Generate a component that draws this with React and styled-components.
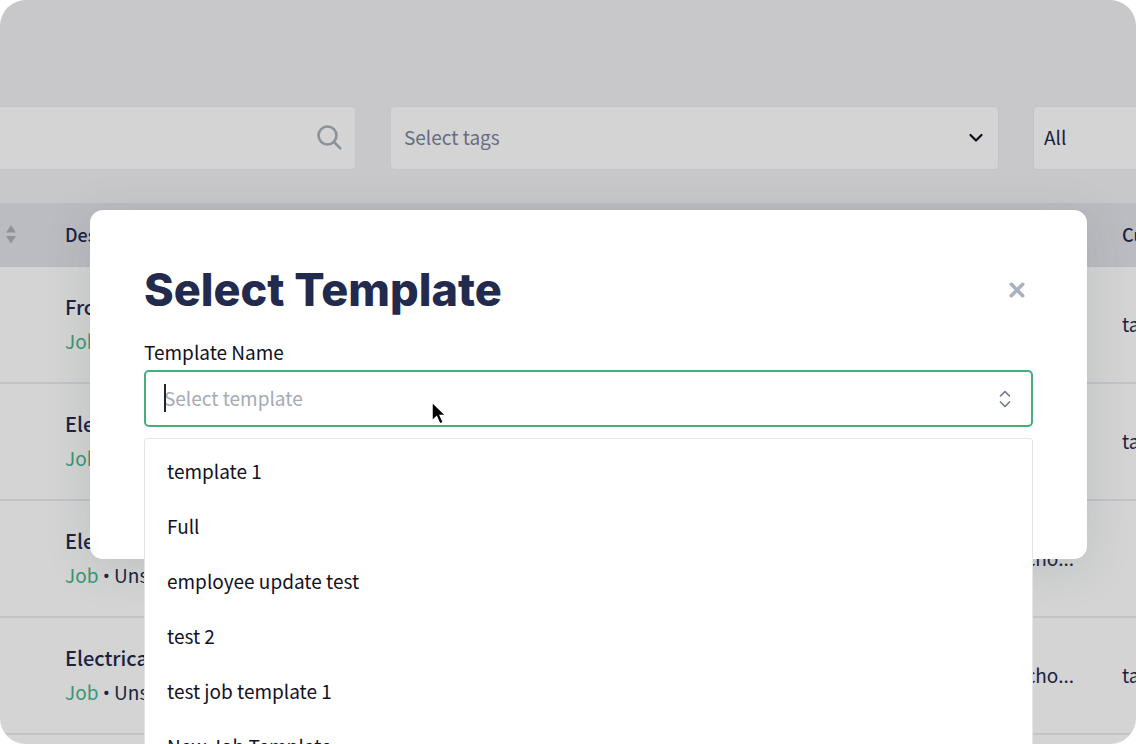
import React from "react";
import styled, { createGlobalStyle } from "styled-components";

const GlobalStyle = createGlobalStyle`
  *, *::before, *::after { box-sizing: border-box; }
  body {
    margin: 0;
    background: #fff;
    color: #222a4d;
    font-family: "Noto Sans CJK SC", "Noto Sans", sans-serif;
    font-size: 19px;
    line-height: 32px;
  }
  button, input, select { font: inherit; color: inherit; }
`;

const Screen = styled.div`
  position: relative;
  height: 100vh;
  overflow: hidden;
  border-radius: 26px;
  background: #f1f1f3;
`;

const Filters = styled.form`
  display: grid;
  grid-template-columns: 356px 1fr 103px;
  gap: 34px;
  padding: 106px 0 33px;
`;

const Field = styled.div`
  display: flex;
  align-items: center;
  height: 64px;
  padding: 0 13px 0 ${(p) => p.$indent || "13px"};
  background: #fff;
  border: 1px solid #ececf1;
  border-left-width: ${(p) => (p.$flush === "left" ? "0" : "1px")};
  border-right-width: ${(p) => (p.$flush === "right" ? "0" : "1px")};
  border-radius: ${(p) =>
    p.$flush === "left" ? "0 5px 5px 0" : p.$flush === "right" ? "5px 0 0 5px" : "5px"};
`;

const SearchInput = styled.input`
  flex: 1;
  min-width: 0;
  border: 0;
  outline: 0;
  background: transparent;
`;

const FilterSelect = styled.select`
  flex: 1;
  min-width: 0;
  border: 0;
  padding: 0 0 2px;
  appearance: none;
  background: transparent;
  color: ${(p) => (p.$muted ? "#7d839d" : "#222a4d")};
`;

const Table = styled.table`
  width: 100%;
  table-layout: fixed;
  border-collapse: separate;
  border-spacing: 0;
  background: #fff;
`;

const HeadCell = styled.th`
  width: ${(p) => p.$width || "auto"};
  height: 64px;
  padding: 0 0 3px;
  background: #e1e3e9;
  text-align: left;
  font-size: 18px;
  font-weight: 500;
  white-space: nowrap;
`;

const SortButton = styled.button`
  display: flex;
  border: 0;
  padding: 0 0 0 5px;
  background: none;
`;

const Cell = styled.td`
  height: 117px;
  padding: 0 ${(p) => (p.$end ? "48px" : "0")} 2px 0;
  border-bottom: 2px solid #ebebf1;
  text-align: ${(p) => (p.$end ? "right" : "left")};
  white-space: nowrap;
`;

const JobCell = styled(Cell)`
  padding-bottom: 0;
`;

const JobName = styled.div`
  font-size: 20px;
  font-weight: 500;
`;

const JobMeta = styled.div`
  margin-top: 2px;
`;

const JobLink = styled.a`
  color: #43b78f;
  text-decoration: none;
`;

const Dot = styled.span`
  font-family: "Open Sans", sans-serif;
`;

const Overlay = styled.div`
  position: absolute;
  inset: 0;
  padding: 210px 49px 0 90px;
  background: rgba(0, 0, 0, 0.17);
`;

const Dialog = styled.section`
  padding: 53px 54px 132px;
  border-radius: 13px;
  background: #fff;
  box-shadow: 0 8px 48px rgba(40, 60, 60, 0.13);
`;

const DialogHeader = styled.header`
  display: flex;
  align-items: center;
  justify-content: space-between;
  height: 53px;
`;

const Title = styled.h1`
  margin: 0;
  font-family: Inter, sans-serif;
  font-size: 45px;
  line-height: 52px;
  font-weight: 800;
`;

const CloseButton = styled.button`
  display: flex;
  border: 0;
  padding: 8px;
  background: none;
`;

const Label = styled.label`
  display: block;
  margin-top: 20px;
  padding-bottom: 2px;
  color: #12121f;
`;

const Combo = styled.div`
  position: relative;
  display: flex;
  align-items: center;
  height: 57px;
  padding: 0 19px 0 18px;
  border: 2px solid #45ae79;
  border-radius: 5px;
`;

const ComboInput = styled.input`
  flex: 1;
  min-width: 0;
  border: 0;
  outline: 0;
  padding: 0 0 2px;
  background: transparent;
  &::placeholder { color: #a5abb5; opacity: 1; }
`;

const Caret = styled.span`
  position: absolute;
  left: 18px;
  top: 12px;
  width: 2px;
  height: 28px;
  background: #24242e;
`;

const Pointer = styled.svg`
  position: absolute;
  left: 284px;
  top: 28px;
`;

const Menu = styled.ul`
  position: absolute;
  top: 66px;
  left: -2px;
  right: -2px;
  margin: 0;
  padding: 4px 0;
  list-style: none;
  border: 1px solid #e4e5e9;
  border-radius: 3px;
  background: #fff;
  color: #12121f;
`;

const Option = styled.li`
  padding: 0 22px;
  line-height: 55px;
`;

const jobs = [
  { name: "Front", site: "cho...", customer: "tag" },
  { name: "Electrical", site: "cho...", customer: "tag" },
  { name: "Electrical", site: "cho...", customer: "" },
  { name: "Electrical", site: "cho...", customer: "tag" },
  { name: "Electrical", site: "cho...", customer: "" },
];

const templates = [
  "template 1",
  "Full",
  "employee update test",
  "test 2",
  "test job template 1",
  "New Job Template",
];

export default function App() {
  return (
    <>
      <GlobalStyle />
      <Screen>
        <Filters>
          <Field $flush="left">
            <SearchInput type="text" aria-label="Search" />
            <svg width="25" height="26" viewBox="0 0 25 26" fill="none" stroke="#a9b0bb" strokeWidth="2.6" strokeLinecap="round">
              <circle cx="10.500" cy="10.500" r="9" />
              <path d="M17 17L23.300 23.300" />
            </svg>
          </Field>
          <Field>
            <FilterSelect $muted aria-label="Tags">
              <option>Select tags</option>
            </FilterSelect>
            <svg width="18" height="18" viewBox="0 0 18 18" fill="none" stroke="#12121f" strokeWidth="2.2" strokeLinecap="round" strokeLinejoin="round">
              <path d="M3.500 6L9 11.500l5.500-5.500" />
            </svg>
          </Field>
          <Field $flush="right" $indent="10px">
            <FilterSelect aria-label="Status">
              <option>All</option>
            </FilterSelect>
          </Field>
        </Filters>
        <Table>
          <thead>
            <tr>
              <HeadCell $width="65px">
                <SortButton type="button" aria-label="Sort">
                  <svg width="12" height="20" viewBox="0 0 12 20" fill="#abb1bb">
                    <path d="M6 1l5 7.500H1zM6 19.500l5-7.500H1z" />
                  </svg>
                </SortButton>
              </HeadCell>
              <HeadCell $width="400px">Description</HeadCell>
              <HeadCell />
              <HeadCell $width="14px">Customer</HeadCell>
            </tr>
          </thead>
          <tbody>
            {jobs.map((job, i) => (
              <tr key={i}>
                <Cell />
                <JobCell>
                  <JobName>{job.name}</JobName>
                  <JobMeta>
                    <JobLink href="#job">Job</JobLink> <Dot>•</Dot> Unscheduled
                  </JobMeta>
                </JobCell>
                <Cell $end>{job.site}</Cell>
                <Cell>{job.customer}</Cell>
              </tr>
            ))}
          </tbody>
        </Table>
        <Overlay>
          <Dialog role="dialog" aria-labelledby="dialog-title">
            <DialogHeader>
              <Title id="dialog-title">Select Template</Title>
              <CloseButton type="button" aria-label="Close">
                <svg width="16" height="16" viewBox="0 0 16 16" stroke="#a9b1bd" strokeWidth="3.6" strokeLinecap="round">
                  <path d="M2.300 2.300l11.400 11.400M13.700 2.300L2.300 13.700" />
                </svg>
              </CloseButton>
            </DialogHeader>
            <Label htmlFor="template">Template Name</Label>
            <Combo>
              <ComboInput id="template" type="text" placeholder="Select template" />
              <Caret />
              <svg width="14" height="20" viewBox="0 0 14 20" fill="none" stroke="#757c88" strokeWidth="1.700" strokeLinecap="round" strokeLinejoin="round">
                <path d="M2.500 7L7 2.500l4.500 4.500M2.500 13L7 17.500l4.500-4.500" />
              </svg>
              <Menu>
                {templates.map((name) => (
                  <Option key={name}>{name}</Option>
                ))}
              </Menu>
              <Pointer width="18" height="26" viewBox="0 0 18 26">
                <path d="M2 2v19l4.600-4.300 3.200 7.300 3.600-1.600-3.200-7H16z" fill="#000" stroke="#fff" strokeWidth="1.500" />
              </Pointer>
            </Combo>
          </Dialog>
        </Overlay>
      </Screen>
    </>
  );
}
